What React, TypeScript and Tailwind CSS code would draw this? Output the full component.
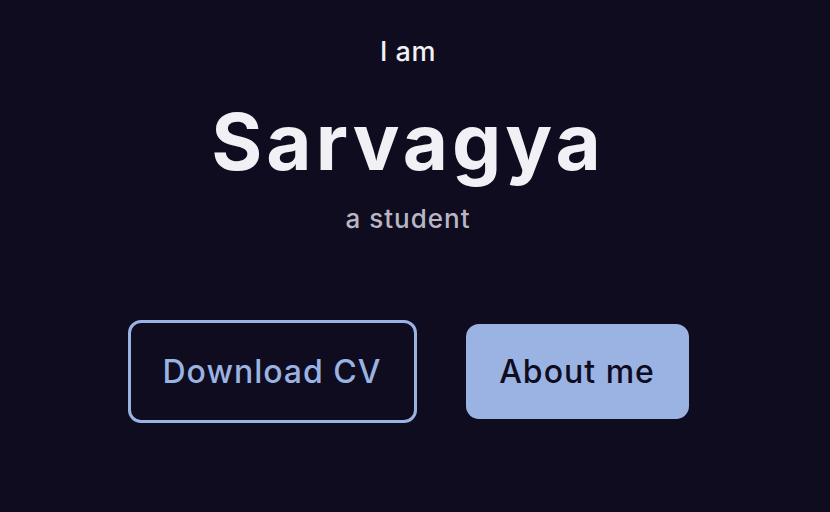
import React from 'react';

const font = { fontFamily: 'Inter, "Noto Sans", sans-serif' };

export default function App() {
  return (
    <div className="w-[830px] h-[512px] bg-[#0e0c1e] overflow-hidden" style={font}>
      <div className="w-[816px] flex flex-col items-center">
        <p className="mt-[38px] text-[27px] leading-[28px] font-medium text-[#f1f0f5] tracking-[0.5px]">I am</p>
        <h1 className="mt-[37px] text-[78px] leading-[78px] font-bold text-[#f1f0f5] tracking-[4px]">Sarvagya</h1>
        <p className="mt-[24px] text-[26px] leading-[28px] font-medium text-[#b9b6c4] tracking-[1px]">a student</p>
        <div className="mt-[87px] flex items-center gap-[49px]">
          <button className="w-[289px] h-[103px] rounded-[13px] border-[3px] border-[#9ab3e3] text-[#9ab3e3] text-[32px] font-medium tracking-[1px]">
            Download CV
          </button>
          <button className="w-[223px] h-[95px] rounded-[13px] bg-[#9bb3e3] text-[#0e0c1e] text-[32px] font-medium tracking-[1px]">
            About me
          </button>
        </div>
      </div>
    </div>
  );
}
